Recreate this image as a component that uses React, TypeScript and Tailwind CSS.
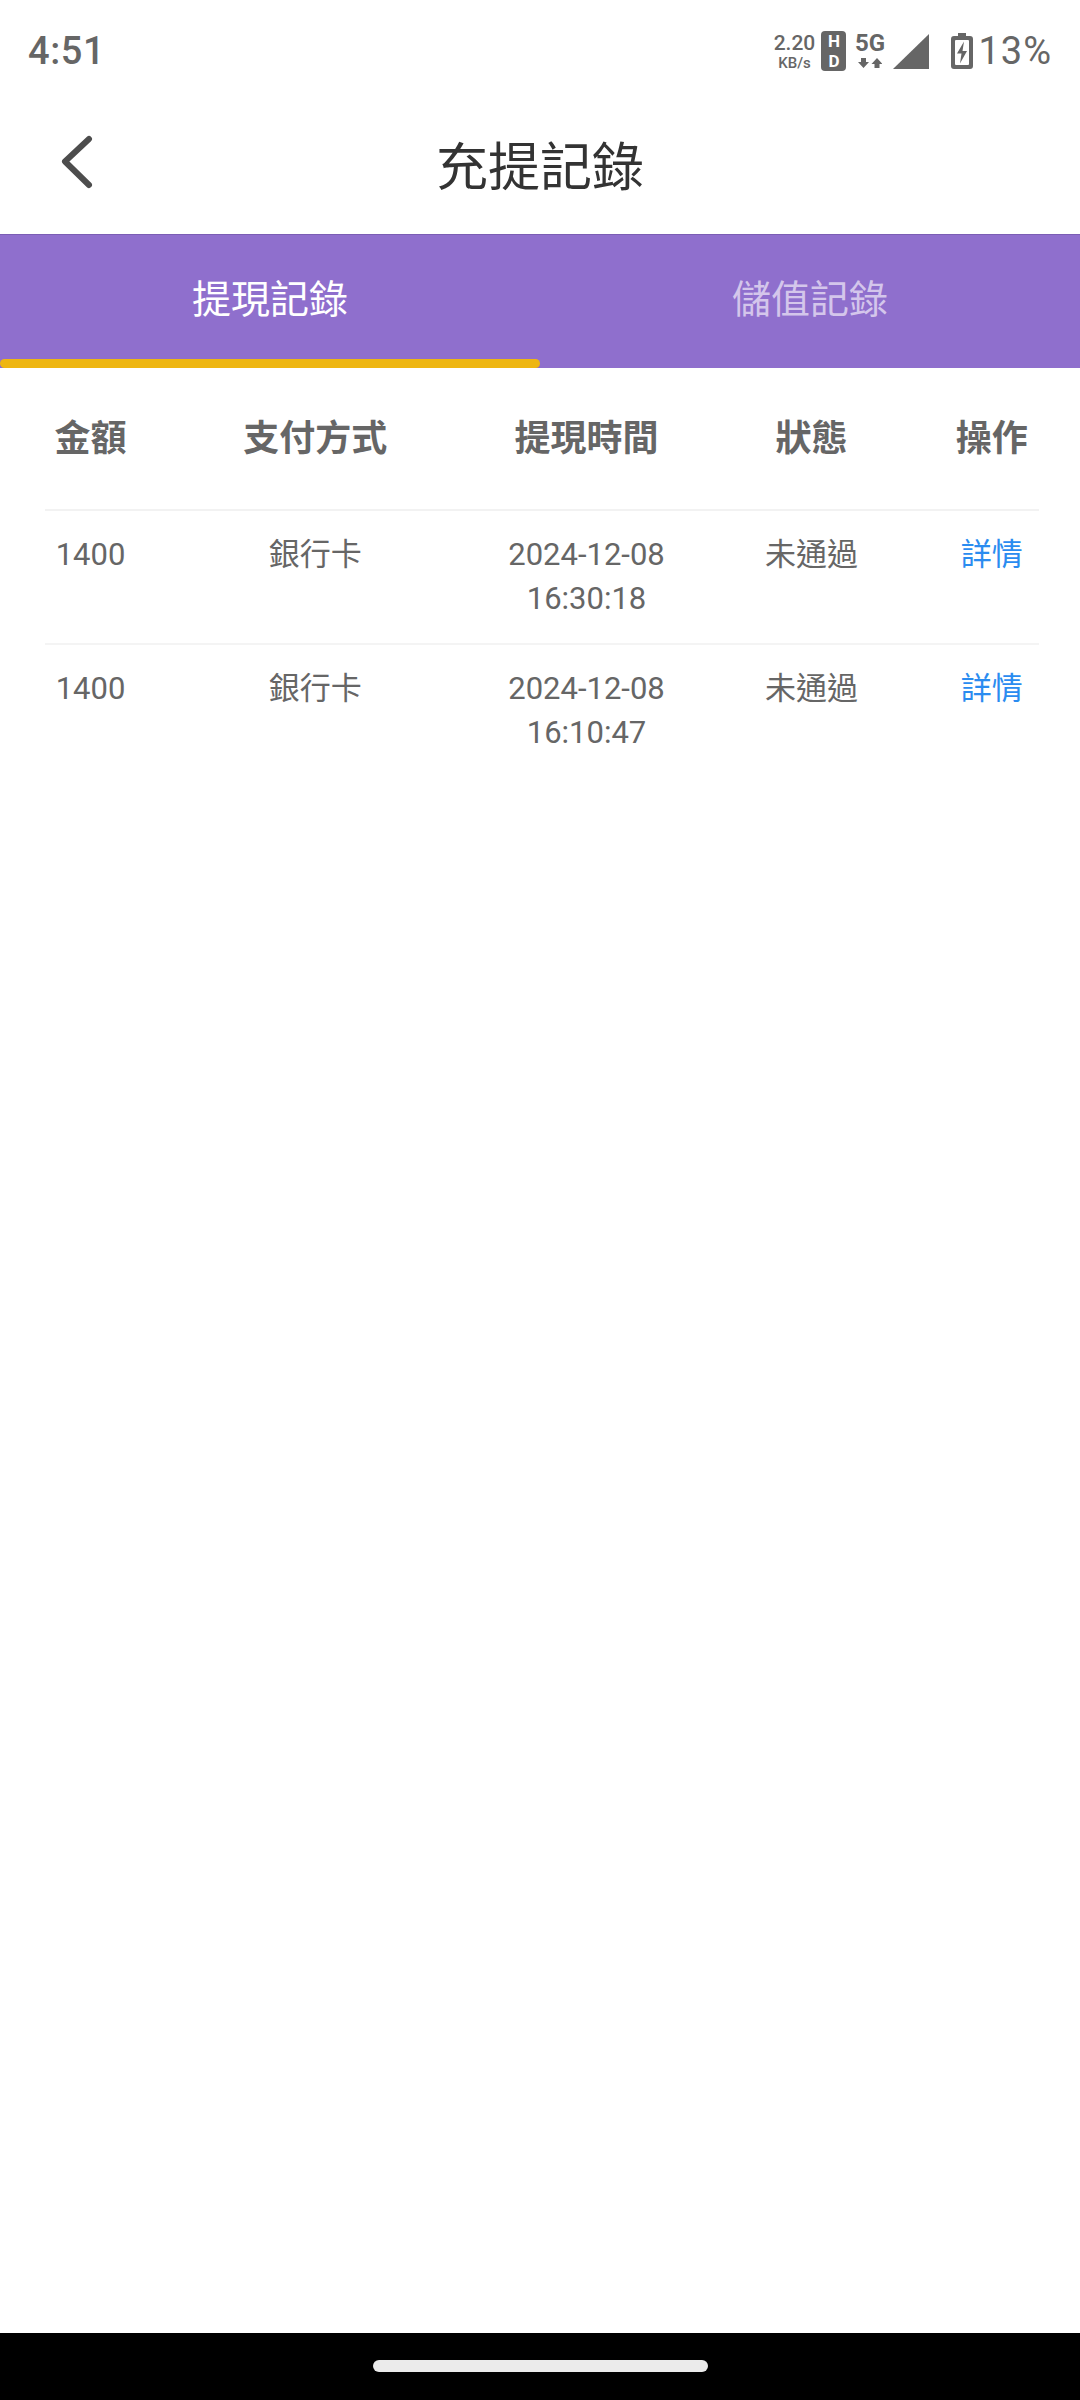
const cjk = { fontFamily: '"Noto Sans CJK TC", "Noto Sans CJK SC", Roboto, sans-serif' };
const roboto = { fontFamily: 'Roboto, "Noto Sans CJK TC", sans-serif' };

const records = [
  { amount: "1400", method: "銀行卡", date: "2024-12-08", time: "16:30:18", status: "未通過" },
  { amount: "1400", method: "銀行卡", date: "2024-12-08", time: "16:10:47", status: "未通過" },
];

const columns = "grid grid-cols-[91px_358.5px_184px_266px_94.5px] text-center";

function StatusBar() {
  return (
    <div className="h-[102px] shrink-0 bg-white text-[#666666] flex items-center pl-[28px] pr-[28px]" style={roboto}>
      <span className="text-[38px] font-medium leading-none tracking-[0.6px]">4:51</span>
      <div className="ml-auto flex items-center">
        <div className="w-[42px] flex flex-col items-center font-medium mt-[2px]">
          <span className="text-[21px] leading-[21px]">2.20</span>
          <span className="text-[15px] leading-[16px] mt-[1px]">KB/s</span>
        </div>
        <div className="ml-[6px] w-[25px] h-[40px] rounded-[4px] bg-[#666666] text-white font-bold text-center text-[17px] leading-[20px]">
          H<br />D
        </div>
        <div className="ml-[7px] w-[33px] flex flex-col items-center mt-[-2px]">
          <span className="text-[24px] font-bold leading-[22px]">5G</span>
          <svg width="24" height="10" viewBox="0 0 24 10" className="mt-[4px]" fill="#666666">
            <path d="M3 0h5v4h3l-5.500 6L0 4h3z" />
            <path d="M19 0l5.500 6h-3v4h-5V6h-3z" />
          </svg>
        </div>
        <svg width="36" height="35" viewBox="0 0 36 35" className="ml-[7px]" fill="#666666">
          <path d="M36 0v35H0z" />
        </svg>
        <svg width="22" height="36" viewBox="0 0 22 36" className="ml-[22px]">
          <path fill="#666666" d="M7 0h8v3h4a3 3 0 0 1 3 3v27a3 3 0 0 1-3 3H3a3 3 0 0 1-3-3V6a3 3 0 0 1 3-3h4z" />
          <rect x="4" y="7" width="14" height="25" rx="1" fill="#ffffff" />
          <path fill="#666666" d="M13 8.500 6 20.500h4.500L9 30.500l7-12.500h-4.500z" />
        </svg>
        <span className="ml-[5px] text-[38px] leading-none tracking-[1px]">13%</span>
      </div>
    </div>
  );
}

function TitleBar() {
  return (
    <div className="relative h-[132px] shrink-0 bg-white flex items-center justify-center pb-[8px]">
      <svg width="32" height="54" viewBox="0 0 32 54" className="absolute left-[61px] top-[33px]" fill="none" stroke="#4d4d4d" strokeWidth="6" strokeLinecap="round" strokeLinejoin="round">
        <path d="M28 4 4 26.500 28 50" />
      </svg>
      <h1 className="text-[52px] font-normal text-[#333333] leading-none" style={cjk}>充提記錄</h1>
    </div>
  );
}

function Tabs() {
  return (
    <div className="h-[134px] shrink-0 bg-[#8f6fcd] border-t border-[#7b5eb4] flex text-[39px] leading-none" style={cjk}>
      <div className="relative flex-1 flex items-center justify-center text-white pb-[11px]">
        提現記錄
        <div className="absolute left-0 right-0 bottom-0 h-[9px] rounded-[5px] bg-[#eeb612]" />
      </div>
      <div className="flex-1 flex items-center justify-center text-[#d4c6eb] pb-[11px]">儲值記錄</div>
    </div>
  );
}

function RecordTable() {
  return (
    <div className="ml-[45px] w-[994px]" style={roboto}>
      <div className={`${columns} h-[143px] pb-[7px] items-center text-[36px] font-bold text-[#666666] leading-none border-b-2 border-[#f2f2f2]`} style={cjk}>
        <span>金額</span>
        <span>支付方式</span>
        <span>提現時間</span>
        <span>狀態</span>
        <span>操作</span>
      </div>
      {records.map((r) => (
        <div key={r.time} className={`${columns} h-[134px] pt-[22px] text-[31px] leading-[44px] text-[#666666] border-b-2 border-[#f4f4f4] last:border-b-0`}>
          <span>{r.amount}</span>
          <span className="-mt-[3px]" style={cjk}>{r.method}</span>
          <span>
            {r.date}
            <br />
            {r.time}
          </span>
          <span className="-mt-[3px]" style={cjk}>{r.status}</span>
          <span className="-mt-[3px] text-[#2a8cf0]" style={cjk}>詳情</span>
        </div>
      ))}
    </div>
  );
}

export default function App() {
  return (
    <div className="w-[1080px] h-[2400px] bg-white flex flex-col overflow-hidden">
      <StatusBar />
      <TitleBar />
      <Tabs />
      <div className="flex-1">
        <RecordTable />
      </div>
      <div className="h-[67px] shrink-0 bg-black flex justify-center pt-[27px]">
        <div className="w-[335px] h-[12px] rounded-full bg-[#ebebeb]" />
      </div>
    </div>
  );
}
